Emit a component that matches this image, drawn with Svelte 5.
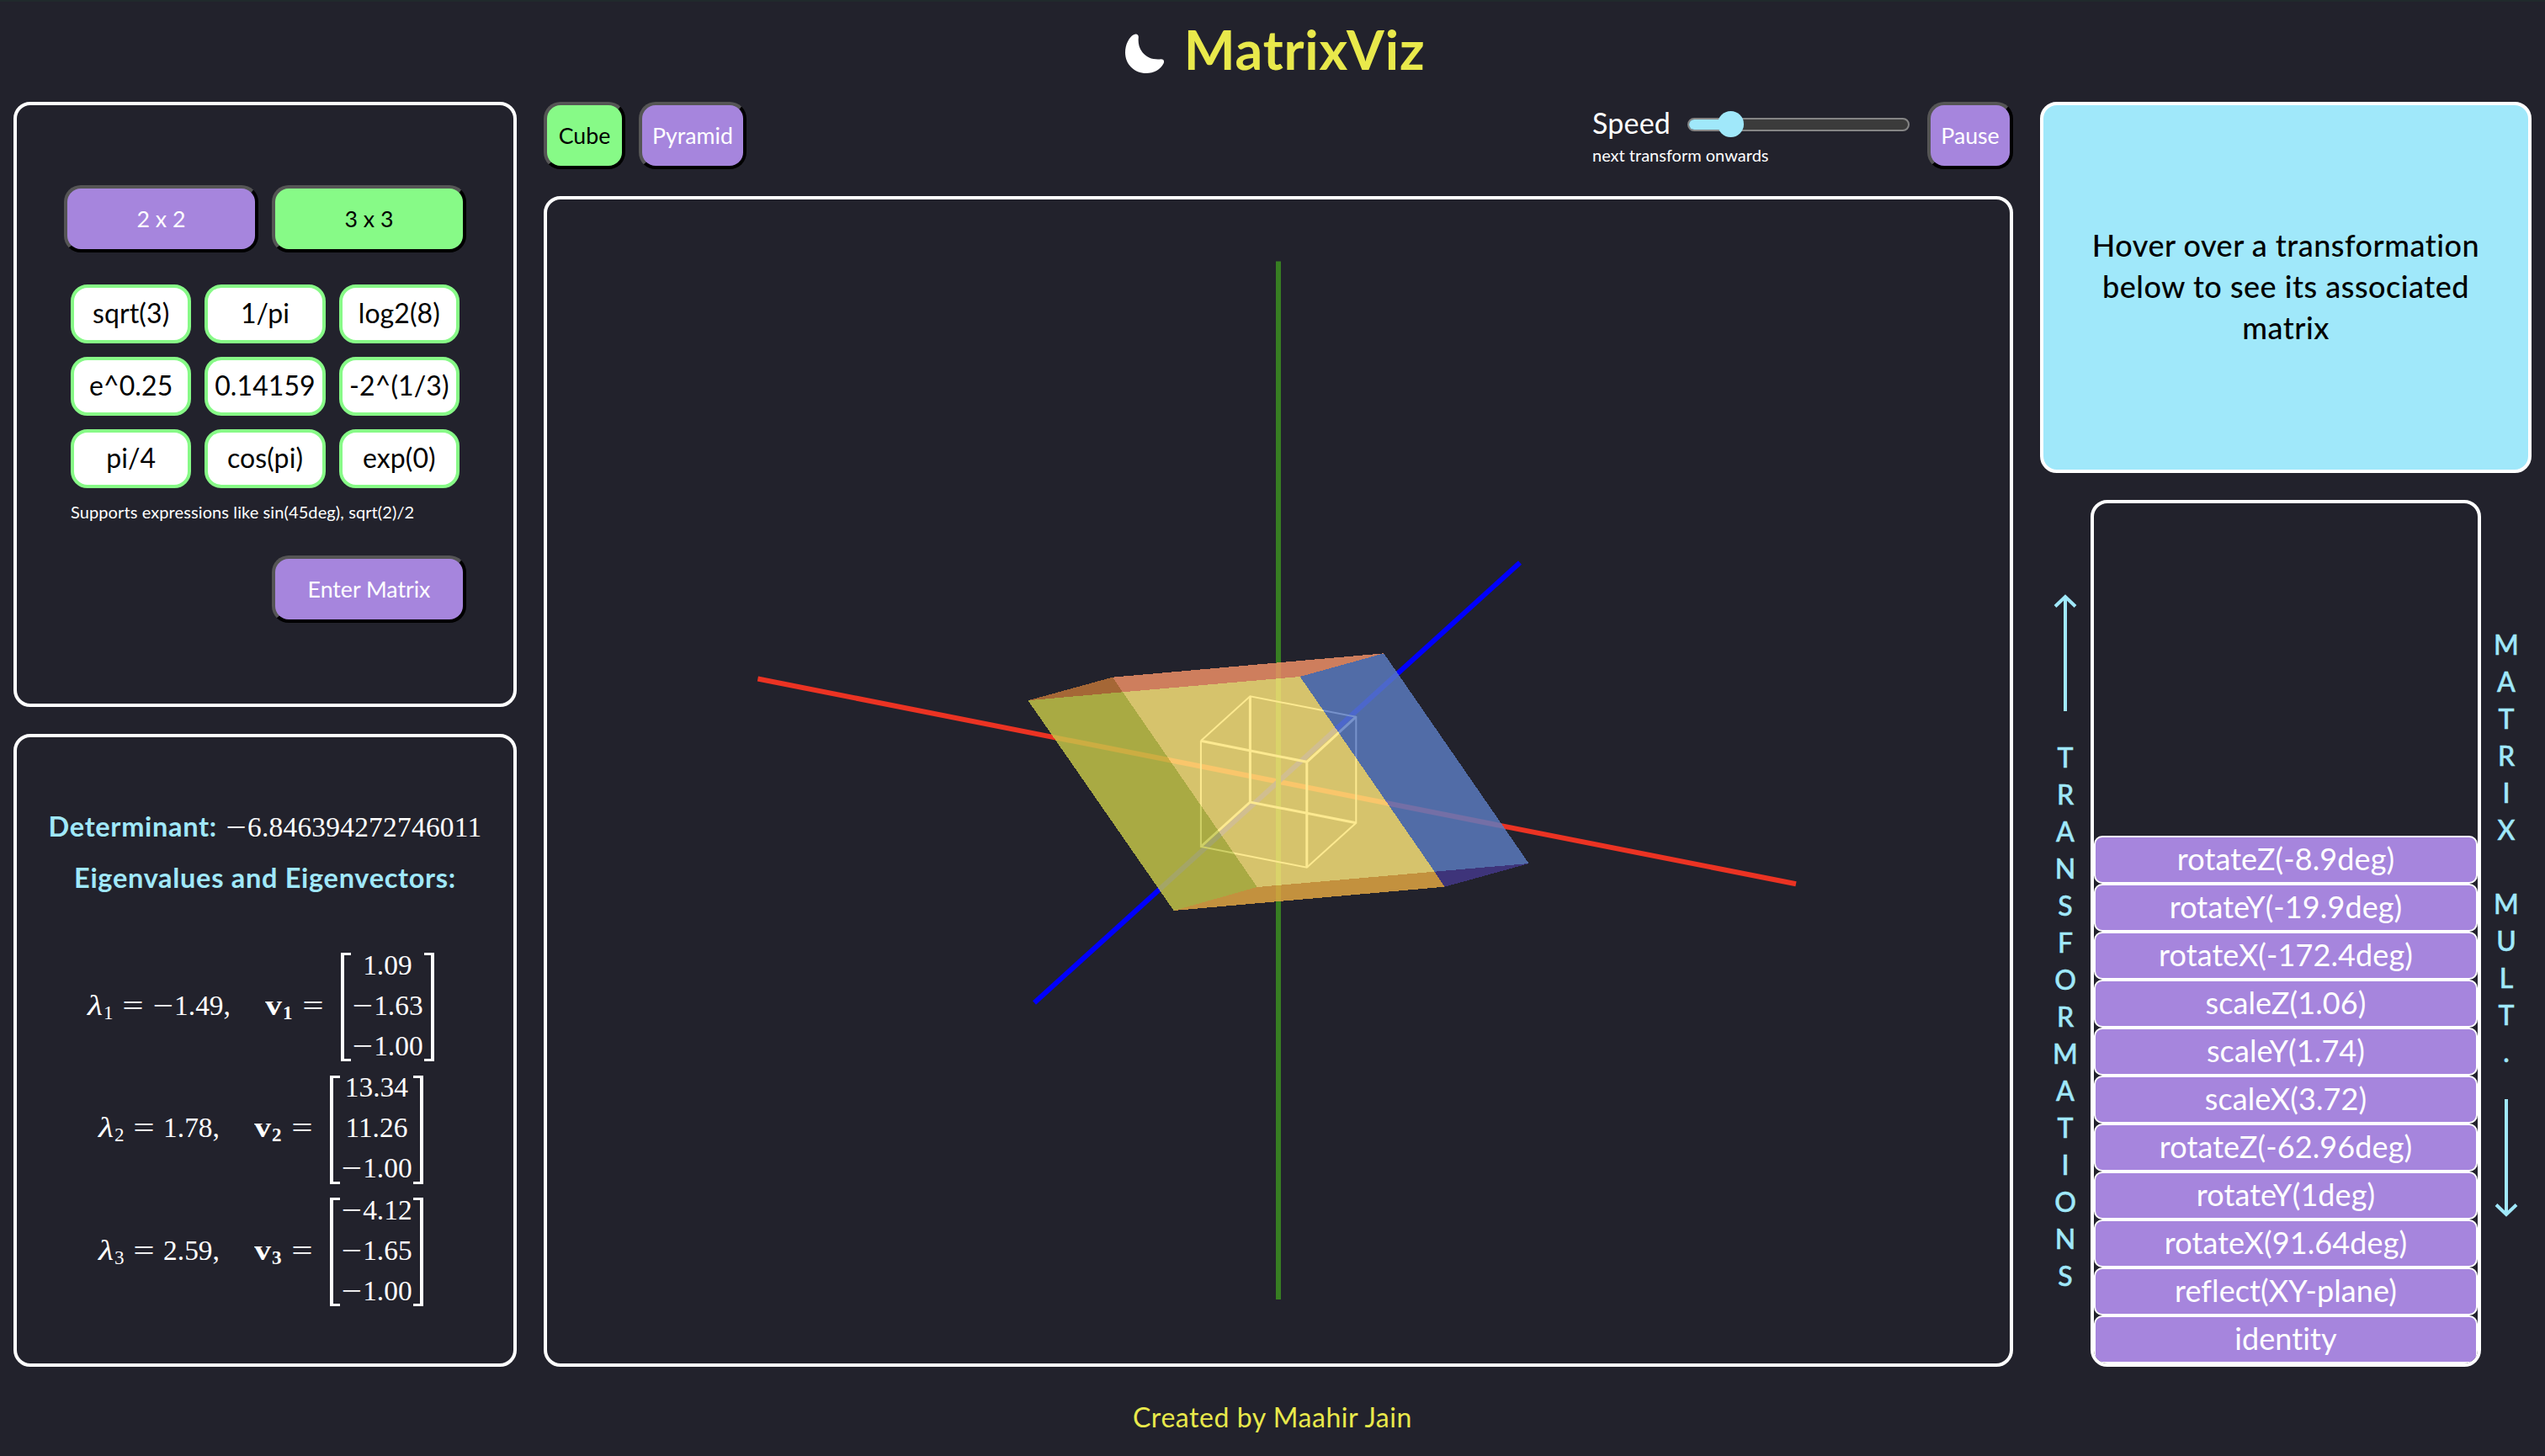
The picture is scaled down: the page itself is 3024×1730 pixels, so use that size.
<script>
  const cells = ['sqrt(3)', '1/pi', 'log2(8)', 'e^0.25', '0.14159', '-2^(1/3)', 'pi/4', 'cos(pi)', 'exp(0)'];
  const pairs = [
    { n: 1, value: '−1.49', vector: ['1.09', '−1.63', '−1.00'] },
    { n: 2, value: '1.78', vector: ['13.34', '11.26', '−1.00'] },
    { n: 3, value: '2.59', vector: ['−4.12', '−1.65', '−1.00'] }
  ];
  const stack = [
    'rotateZ(-8.9deg)', 'rotateY(-19.9deg)', 'rotateX(-172.4deg)', 'scaleZ(1.06)', 'scaleY(1.74)', 'scaleX(3.72)',
    'rotateZ(-62.96deg)', 'rotateY(1deg)', 'rotateX(91.64deg)', 'reflect(XY-plane)', 'identity'
  ];

  // Visible regions of the translucent solid, in canvas coordinates
  const faces = [
    { color: '#c17638', points: '571.5,595.3 672,567.7 684,585.3' },
    { color: '#f29267', points: '672,567.7 994.3,539.3 894.7,567 684,585.3' },
    { color: '#c5c648', points: '571.5,595.3 684,585.3 843.8,817 744.7,845' },
    { color: '#fbe57a', points: '684,585.3 894.7,567 1054.6,798.7 843.8,817' },
    { color: '#5b7cc1', points: '894.7,567 994.3,539.3 1166.6,789 1054.6,798.7' },
    { color: '#45398a', points: '1054.6,798.7 1166.6,789 1066.6,816.7' },
    { color: '#e5a842', points: '744.7,845 843.8,817 1054.6,798.7 1066.6,816.7' }
  ];
  const thick = 'M835.4 590.3V716 M902.8 668.3V793.7 M776.9 643.3L902.8 668.3L961.3 614.7 M961.3 740.7L835.4 716L776.9 769';
  const thin = 'M776.9 643.3L835.4 590.3L961.3 614.7V740.7L902.8 793.7L776.9 769V643.3';
</script>

{#snippet number(text)}{#if text.startsWith('−')}<span class="minus">−</span>{text.slice(1)}{:else}{text}{/if}{/snippet}

<div class="app">
  <header>
    <svg class="moon" viewBox="0 0 46 47"><path d="M10 1.2C13.500 -0.300 16 1 15.800 4.500C15.200 10 16 16.500 20.300 22C25.500 28.700 33 31 41.500 30.400C45.500 30.100 47 32.300 45.500 35.500C42 42.500 34 47 25 47C11 47 0 36.500 0 22.500C0 13 4.500 4 10 1.200Z" /></svg>
    <h1>MatrixViz</h1>
  </header>

  <main>
    <section class="left">
      <div class="panel input">
        <div class="row">
          <button>2 x 2</button>
          <button class="on">3 x 3</button>
        </div>
        <div class="cells">
          {#each cells as c}<div class="cell">{c}</div>{/each}
        </div>
        <p class="hint">Supports expressions like sin(45deg), sqrt(2)/2</p>
        <button class="enter">Enter Matrix</button>
      </div>

      <div class="panel eigen">
        <p class="head"><b class="det">Determinant:</b><span class="math num">{@render number('−6.846394272746011')}</span></p>
        <p class="head"><b class="eig">Eigenvalues and Eigenvectors:</b></p>
        <div class="pairs">
          {#each pairs as p}
            <div class="pair math">
              <span class="lam"><i>λ</i><sub>{p.n}</sub></span>
              <span class="eq">=</span>
              <span class="val">{@render number(p.value)},</span>
              <span class="vec"><b>v</b><sub class="bold">{p.n}</sub></span>
              <span class="eq">=</span>
              <div class="bracket">
                {#each p.vector as v}<span>{@render number(v)}</span>{/each}
              </div>
            </div>
          {/each}
        </div>
      </div>
    </section>

    <section class="center">
      <div class="toolbar">
        <button class="on cube">Cube</button>
        <button class="pyramid">Pyramid</button>
        <div class="speed">
          <div class="line"><span class="label">Speed</span><div class="track"><div class="fill"></div><div class="thumb"></div></div></div>
          <small>next transform onwards</small>
        </div>
        <button class="pause">Pause</button>
      </div>
      <div class="canvas">
        <svg viewBox="0 0 1738 1383" fill="none">
          <path d="M250.400 569.500L1484 813.300" stroke="#eb3323" stroke-width="6" />
          <path d="M579 954.500L1156 431.500" stroke="#00f" stroke-width="6" />
          <path d="M869 73.500V1307" stroke="#377e22" stroke-width="6" />
          <path d={thick} stroke="#fff" stroke-width="3" />
          <path d={thin} stroke="#fff" stroke-width="2" />
          {#each faces as f}<polygon points={f.points} fill={f.color} opacity="0.83" shape-rendering="crispEdges" />{/each}
        </svg>
      </div>
    </section>

    <section class="right">
      <div class="panel info">Hover over a transformation below to see its associated matrix</div>
      <div class="flow">
        <div class="side up">
          <svg viewBox="0 0 28 140"><path d="M14 3V139M2 14.500L14 3L26 14.500" /></svg>
          <div class="letters">{#each 'TRANSFORMATIONS' as l}<span>{l}</span>{/each}</div>
        </div>
        <div class="panel stack">
          {#each stack as s}<div class="item">{s}</div>{/each}
        </div>
        <div class="side down">
          <div class="letters">{#each 'MATRIX MULT.' as l}<span>{l}</span>{/each}</div>
          <svg viewBox="0 0 28 140"><path d="M14 0V137M2 125.500L14 137L26 125.500" /></svg>
        </div>
      </div>
    </section>
  </main>

  <footer>Created by Maahir Jain</footer>
</div>

<style>
  :global(body) { background: #22222c; }
  * { box-sizing: border-box; }
  .app {
    width: 3024px; height: 1730px; overflow: hidden; background: #22222c; color: #fff;
    font-family: Lato, 'Open Sans', sans-serif; border-top: 2px solid #20292c;
    font-variant-ligatures: none;
  }
  header { height: 119px; display: flex; justify-content: center; padding: 38px 0 0 6px; gap: 24px; }
  .moon { width: 46px; height: 47px; fill: #fff; }
  h1 { margin: -20px 0 0; font-size: 64.500px; line-height: 76px; font-weight: 700; letter-spacing: 0.800px; color: #e9e94b; }
  main { display: flex; height: 1503px; padding: 0 16px; gap: 32px; }
  .panel { border: 4px solid #fff; border-radius: 20px; }
  p { margin: 0; }

  button {
    height: 80px; padding: 0 0 1px; border: 4px solid; border-color: #555 #000 #000 #555; border-radius: 20px;
    background: #a685dd; color: #fff; font: 400 26.700px Lato, sans-serif; white-space: nowrap;
  }
  button.on { background: #87fa87; color: #000; }

  .left { width: 598px; display: flex; flex-direction: column; gap: 32px; }
  .input { height: 719px; padding: 95px 56px 0; display: flex; flex-direction: column; }
  .row { display: flex; gap: 16px; }
  .row button, .enter { width: 231px; }
  .cells { display: grid; grid-template-columns: repeat(3, 1fr); gap: 16px; margin: 38px 8px 0; }
  .cell {
    height: 70px; border: 4px solid #87fa87; border-radius: 20px; background: #fff; color: #000;
    font-size: 32px; line-height: 60px; text-align: center; white-space: nowrap; letter-spacing: 0.1px;
  }
  .hint { margin: 16px 8px 0; font-size: 20px; line-height: 25px; height: 64px; white-space: nowrap; letter-spacing: 0.1px; }
  .enter { align-self: flex-end; }

  .eigen { height: 752px; padding-top: 76px; }
  .head { display: flex; justify-content: center; align-items: baseline; height: 60px; font-size: 32px; line-height: 60px; color: #a0e8fa; white-space: nowrap; }
  .det { font-size: 32.500px; letter-spacing: 0.700px; }
  .eig { font-size: 32.500px; letter-spacing: 0.700px; line-height: 62px; }
  .num { margin-left: 10px; color: #fff; letter-spacing: 0.250px; }
  .math { font-family: 'Liberation Serif', serif; font-size: 33.400px; }
  .minus { display: inline-block; width: 26px; text-align: center; transform: scaleX(1.3); }
  .pairs { margin-top: 60px; padding-right: 10px; display: flex; flex-direction: column; align-items: center; gap: 16.500px; }
  .pair { height: 129px; display: flex; align-items: center; white-space: nowrap; line-height: 48px; }
  .pair > span { padding-bottom: 4px; }
  sub { font-size: 23px; line-height: 0; vertical-align: -5px; }
  .bold { font-weight: 700; }
  .lam { width: 34.500px; }
  .lam i { display: inline-block; width: 19px; transform: scaleX(1.25); transform-origin: left; }
  .eq { width: 38px; text-align: center; transform: scaleX(1.35); }
  .val { margin: 0 41px 0 4.500px; }
  .vec { width: 38.500px; }
  .vec b { display: inline-block; width: 21px; transform: scaleX(1.2); transform-origin: left; }
  .bracket {
    margin-left: 13.500px; width: 111px; height: 129px; padding-bottom: 4px; display: flex; flex-direction: column; justify-content: center; align-items: center;
    background: linear-gradient(#fff, #fff) 0 0 / 4px 100%, linear-gradient(#fff, #fff) 100% 0 / 4px 100%,
      linear-gradient(#fff, #fff) 0 0 / 12px 3px, linear-gradient(#fff, #fff) 100% 0 / 12px 3px,
      linear-gradient(#fff, #fff) 0 100% / 12px 3px, linear-gradient(#fff, #fff) 100% 100% / 12px 3px;
    background-repeat: no-repeat;
  }

  .center { width: 1746px; }
  .toolbar { display: flex; height: 112px; }
  .cube { width: 97px; margin-right: 16px; }
  .pyramid { width: 128px; }
  .speed { margin-left: auto; width: 378px; margin-right: 20px; }
  .line { display: flex; align-items: center; height: 54px; }
  .label { width: 113px; padding-bottom: 5px; font-size: 34px; letter-spacing: 0.2px; }
  .track { position: relative; width: 264px; height: 16px; border: 2px solid #858585; border-radius: 8px; background: #3b3b3b; }
  .fill { width: 50px; height: 12px; border-radius: 6px 0 0 6px; background: #a0e8fa; }
  .thumb { position: absolute; left: 34px; top: -10px; width: 31px; height: 31px; border-radius: 50%; background: #a0e8fa; }
  small { display: block; font-size: 20px; line-height: 19px; }
  .pause { width: 102px; }
  .canvas { height: 1391px; border: 4px solid #fff; border-radius: 20px; }
  .canvas svg { display: block; width: 1738px; height: 1383px; }

  .right { width: 584px; }
  .info {
    height: 441px; margin-bottom: 32px; padding: 142px 50px 0; background: #a0e8fa; color: #000;
    font-size: 36px; line-height: 49px; font-weight: 500; text-align: center; letter-spacing: 0.500px;
  }
  .flow { display: flex; height: 1030px; }
  .side { width: 60px; display: flex; flex-direction: column; align-items: center; color: #a0e8fa; }
  .side svg { width: 28px; height: 140px; flex: none; fill: none; stroke: #a0e8fa; stroke-width: 4; }
  .up { padding-top: 112px; }
  .down { padding-top: 150px; }
  .letters { display: flex; flex-direction: column; font-size: 32px; font-weight: 500; -webkit-text-stroke: 0.500px #a0e8fa; }
  .letters span { height: 44px; line-height: 44px; text-align: center; }
  .up .letters { margin-top: 32px; }
  .down .letters { margin-bottom: 34px; }
  .stack { width: 464px; overflow: hidden; display: flex; flex-direction: column; justify-content: flex-end; }
  .item {
    height: 57px; flex: none; border: 2px solid #fff; border-radius: 10px; background: #a685dd;
    font-size: 36px; line-height: 51px; text-align: center; white-space: nowrap; letter-spacing: 0.100px;
  }
  footer { margin-top: 40px; font-size: 32px; line-height: 40px; text-align: center; color: #e9e94b; letter-spacing: 0.550px; }
</style>
